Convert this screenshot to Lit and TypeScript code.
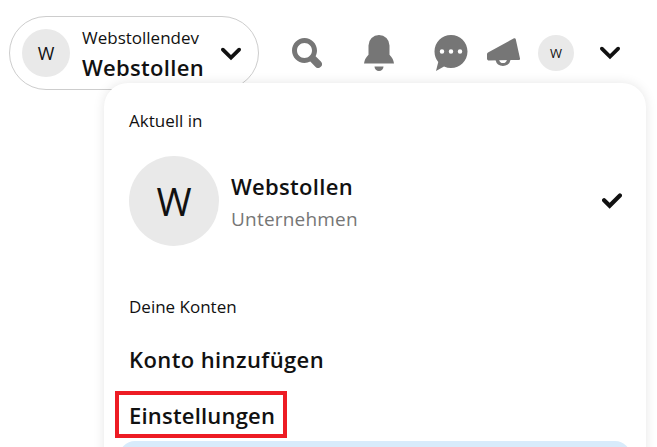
import { LitElement, html, css, svg } from 'lit'
import { customElement } from 'lit/decorators.js'

const chevron = svg`<path d="M12 19.5.66 8.29c-.88-.86-.88-2.27 0-3.14.88-.87 2.3-.87 3.18 0L12 13.21l8.16-8.06c.88-.87 2.3-.87 3.18 0 .88.87.88 2.28 0 3.14z"/>`
const search = svg`<path d="M10 16c-3.31 0-6-2.69-6-6s2.69-6 6-6 6 2.69 6 6-2.69 6-6 6m13.12 2.88-4.26-4.26C19.55 13.24 20 11.67 20 10 20 4.48 15.52 0 10 0S0 4.48 0 10s4.48 10 10 10c1.67 0 3.24-.45 4.62-1.14l4.26 4.26a3 3 0 0 0 4.24-4.24"/>`
const bell = svg`<path d="M19 7v6.17A10 10 0 0 1 22 19H2a10 10 0 0 1 3-5.83V7a7 7 0 1 1 14 0m-4 14a3 3 0 1 1-6 0z"/>`
const bubble = svg`<path fill-rule="evenodd" d="M18 12.5a1.5 1.5 0 1 1 .001-3.001A1.5 1.5 0 0 1 18 12.5m-6 0a1.5 1.5 0 1 1 .001-3.001A1.5 1.5 0 0 1 12 12.5m-6 0a1.5 1.5 0 1 1 .001-3.001A1.5 1.5 0 0 1 6 12.5M12 0C5.925 0 1 4.925 1 11c0 2.653.94 5.086 2.504 6.986L2 24l5.336-3.049A10.93 10.93 0 0 0 12 22c6.075 0 11-4.925 11-11S18.075 0 12 0"/>`
const megaphone = svg`<path d="M1 14.5 27 .3c.7-.4 1.5 0 1.7.7L33 20.5c.2.8-.3 1.4-1 1.4L2 22.5c-1 0-2-.8-2-1.8v-4.6c0-.7.4-1.3 1-1.6z"/><path d="M8.5 22a7.7 7.7 0 0 0 15 0h-3.6a4 4 0 0 1-7.8 0z"/>`
const check = svg`<path d="M9.17 21.25.73 12.8a2.5 2.5 0 0 1 3.54-3.54l4.9 4.9L19.73 3.6a2.5 2.5 0 0 1 3.54 3.54z"/>`

@customElement('app-root')
export class AppRoot extends LitElement {
  static styles = css`
    :host {
      display: block;
      position: relative;
      height: 447px;
      overflow: hidden;
      background: #fff;
      color: #111;
      font-family: 'Open Sans', 'Noto Sans', sans-serif;
    }
    svg {
      display: block;
      fill: currentColor;
    }
    .bar {
      display: flex;
      align-items: center;
      padding: 16px 0 0 9px;
    }
    .pill {
      display: flex;
      align-items: center;
      box-sizing: border-box;
      width: 250px;
      height: 74px;
      padding: 0 0 0 12px;
      border: 1px solid #cdcdcd;
      border-radius: 37px;
    }
    .avatar {
      display: flex;
      align-items: center;
      justify-content: center;
      flex: none;
      width: 48px;
      height: 48px;
      border-radius: 50%;
      background: #e9e9e9;
      font-size: 18px;
    }
    .who {
      margin-left: 12px;
      padding-top: 2px;
      width: 130px;
    }
    .handle {
      font-size: 17px;
      line-height: 22px;
    }
    .title {
      margin-top: 3px;
      font-size: 22px;
      font-weight: 600;
      line-height: 30px;
      letter-spacing: 0.3px;
    }
    .pill svg {
      margin: 2px 0 0 9px;
    }
    .icons {
      display: flex;
      align-items: center;
      color: #767676;
    }
    .search { margin-left: 33px; }
    .bell { margin-left: 39px; }
    .chat { margin-left: 36px; }
    .mega { margin-left: 18px; }
    .mini {
      width: 36px;
      height: 36px;
      margin-left: 18px;
      font-size: 13px;
      color: #111;
    }
    .more {
      margin-left: 26px;
      color: #111;
    }
    .menu {
      position: absolute;
      left: 104px;
      right: 11px;
      top: 83px;
      height: 400px;
      box-sizing: border-box;
      padding: 26px 24px 0 25px;
      border-radius: 24px;
      background: #fff;
      box-shadow: 0 0 12px rgba(0, 0, 0, 0.1);
    }
    .label {
      font-size: 17px;
      line-height: 24px;
    }
    .current {
      display: flex;
      align-items: center;
      margin-top: 23px;
    }
    .big {
      width: 90px;
      height: 90px;
      font-size: 38px;
    }
    .info {
      flex: 1;
      margin-left: 12px;
    }
    .name {
      font-size: 22px;
      font-weight: 600;
      line-height: 30px;
      letter-spacing: 0.3px;
    }
    .type {
      margin-top: 5px;
      font-size: 19px;
      line-height: 26px;
      letter-spacing: 0.2px;
      color: #767676;
    }
    .accounts {
      margin-top: 49px;
    }
    .action {
      position: relative;
      margin-top: 25px;
      font-size: 22px;
      font-weight: 600;
      line-height: 30px;
      letter-spacing: 0.4px;
    }
    .settings {
      margin-top: 26px;
      letter-spacing: 0.2px;
    }
    .mark {
      position: absolute;
      left: -14px;
      top: -9px;
      width: 172px;
      height: 47px;
      box-sizing: border-box;
      border: 4px solid #ed1c24;
    }
    .upsell {
      height: 60px;
      margin: 11px -9px 0 -10px;
      border-radius: 16px;
      background: #d8ebfb;
    }
  `

  render() {
    return html`
      <div class="bar">
        <div class="pill">
          <div class="avatar">W</div>
          <div class="who">
            <div class="handle">Webstollendev</div>
            <div class="title">Webstollen</div>
          </div>
          <svg width="20" height="20" viewBox="0 0 24 24">${chevron}</svg>
        </div>
        <div class="icons">
          <svg class="search" width="30" height="30" viewBox="0 0 24 24">${search}</svg>
          <svg class="bell" width="36" height="36" viewBox="0 0 24 24">${bell}</svg>
          <svg class="chat" width="36" height="36" viewBox="0 0 24 24">${bubble}</svg>
          <svg class="mega" width="33" height="30" viewBox="0 0 33 30">${megaphone}</svg>
          <div class="avatar mini">W</div>
          <svg class="more" width="20" height="20" viewBox="0 0 24 24">${chevron}</svg>
        </div>
      </div>
      <div class="menu">
        <div class="label">Aktuell in</div>
        <div class="current">
          <div class="avatar big">W</div>
          <div class="info">
            <div class="name">Webstollen</div>
            <div class="type">Unternehmen</div>
          </div>
          <svg width="20" height="20" viewBox="0 0 24 24">${check}</svg>
        </div>
        <div class="label accounts">Deine Konten</div>
        <div class="action">Konto hinzufügen</div>
        <div class="action settings">
          Einstellungen
          <div class="mark"></div>
        </div>
        <div class="upsell"></div>
      </div>
    `
  }
}
